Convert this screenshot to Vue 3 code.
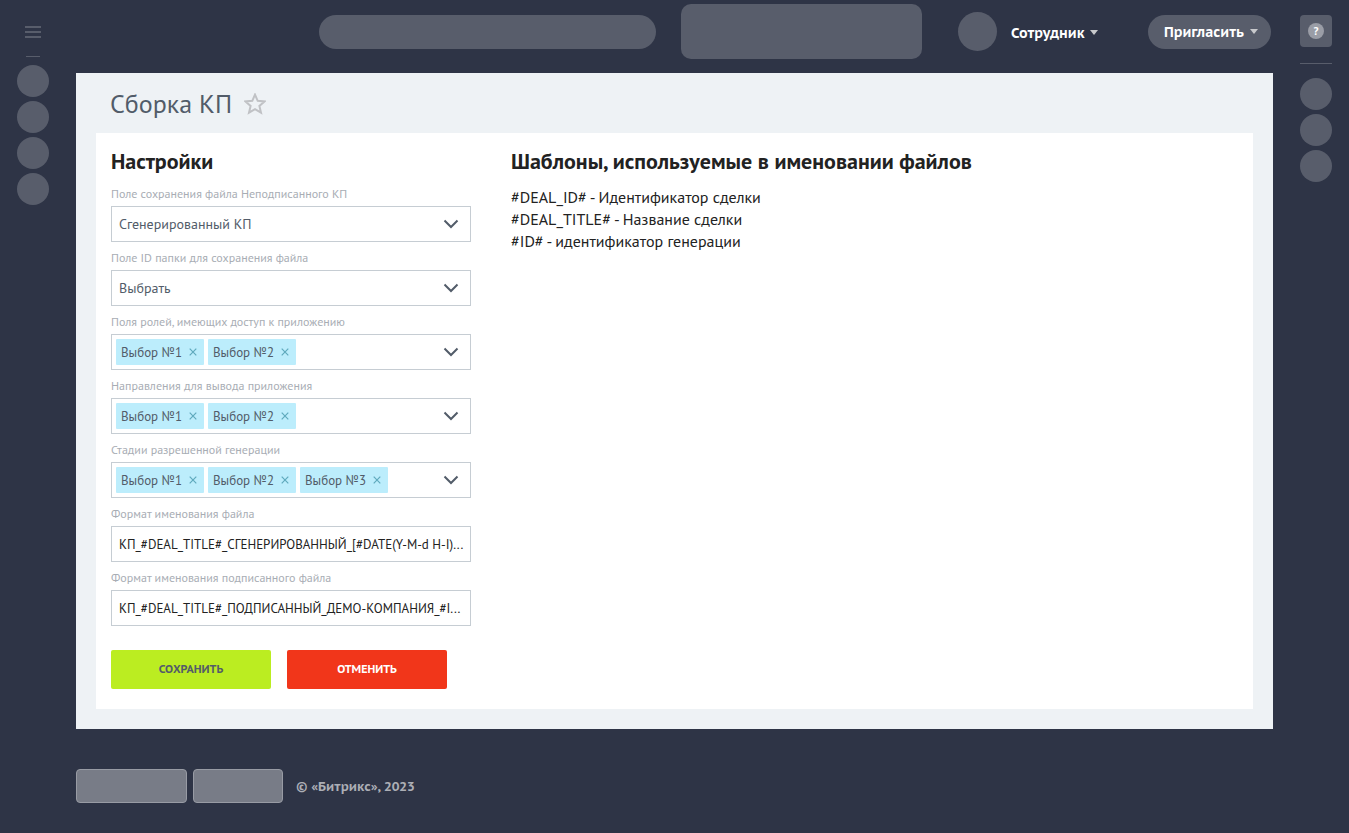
<script setup>
import { reactive, ref } from 'vue'

const selects = reactive([
  { id: 'unsigned-field', label: 'Поле сохранения файла Неподписанного КП', value: 'Сгенерированный КП' },
  { id: 'folder-field', label: 'Поле ID папки для сохранения файла', value: 'Выбрать' },
])

const multis = reactive([
  { id: 'roles', label: 'Поля ролей, имеющих доступ к приложению', tags: ['Выбор №1', 'Выбор №2'] },
  { id: 'directions', label: 'Направления для вывода приложения', tags: ['Выбор №1', 'Выбор №2'] },
  { id: 'stages', label: 'Стадии разрешенной генерации', tags: ['Выбор №1', 'Выбор №2', 'Выбор №3'] },
])

const inputs = reactive([
  { id: 'file-name', label: 'Формат именования файла', value: 'КП_#DEAL_TITLE#_СГЕНЕРИРОВАННЫЙ_[#DATE(Y-M-d H-I)...' },
  { id: 'signed-name', label: 'Формат именования подписанного файла', value: 'КП_#DEAL_TITLE#_ПОДПИСАННЫЙ_ДЕМО-КОМПАНИЯ_#I...' },
])

const templates = ref([
  '#DEAL_ID# - Идентификатор сделки',
  '#DEAL_TITLE# - Название сделки',
  '#ID# - идентификатор генерации',
])

function removeTag(field, index) {
  field.tags.splice(index, 1)
}
</script>

<template>
  <div class="shell">
    <nav class="rail rail-left">
      <button class="burger" type="button"><span></span><span></span><span></span></button>
      <hr class="rail-line short" />
      <button v-for="n in 4" :key="n" class="dot" type="button"></button>
    </nav>

    <div class="center">
      <header class="topbar">
        <div class="search"></div>
        <div class="clock"></div>
        <div class="avatar"></div>
        <button class="user" type="button">
          Сотрудник
          <svg class="caret" viewBox="0 0 8 5"><path d="M0 0h8L4 5z" /></svg>
        </button>
        <button class="invite" type="button">
          Пригласить
          <svg class="caret" viewBox="0 0 8 5"><path d="M0 0h8L4 5z" /></svg>
        </button>
      </header>

      <main class="page">
        <div class="page-head">
          <h1>Сборка КП</h1>
          <button class="star" type="button">
            <svg viewBox="0 0 22 22">
              <path d="M11 1.6l2.7 6.2 6.9.6-5.2 4.5 1.6 6.8-6-3.6-6 3.6 1.6-6.8L1.4 8.4l6.9-.6z" />
            </svg>
          </button>
        </div>

        <div class="panel">
          <form class="settings" @submit.prevent>
            <h2>Настройки</h2>

            <div v-for="f in selects" :key="f.id" class="field">
              <label :for="f.id">{{ f.label }}</label>
              <div class="control">
                <select :id="f.id"><option>{{ f.value }}</option></select>
                <svg class="chevron" viewBox="0 0 16 10"><path d="M1.5 1.5L8 8l6.5-6.5" /></svg>
              </div>
            </div>

            <div v-for="f in multis" :key="f.id" class="field">
              <label :for="f.id">{{ f.label }}</label>
              <div class="control">
                <div class="tags">
                  <span v-for="(tag, i) in f.tags" :key="tag" class="tag">
                    {{ tag }}
                    <button type="button" class="tag-x" @click="removeTag(f, i)">
                      <svg viewBox="0 0 8 8"><path d="M.7.7l6.6 6.6M7.3.7L.7 7.3" /></svg>
                    </button>
                  </span>
                </div>
                <button :id="f.id" type="button" class="opener">
                  <svg class="chevron" viewBox="0 0 16 10"><path d="M1.5 1.5L8 8l6.5-6.5" /></svg>
                </button>
              </div>
            </div>

            <div v-for="f in inputs" :key="f.id" class="field">
              <label :for="f.id">{{ f.label }}</label>
              <div class="control">
                <input :id="f.id" v-model="f.value" type="text" />
              </div>
            </div>

            <div class="actions">
              <button class="save" type="submit">СОХРАНИТЬ</button>
              <button class="cancel" type="button">ОТМЕНИТЬ</button>
            </div>
          </form>

          <section class="templates">
            <h2>Шаблоны, используемые в именовании файлов</h2>
            <ul>
              <li v-for="t in templates" :key="t">{{ t }}</li>
            </ul>
          </section>
        </div>
      </main>

      <footer class="footer">
        <div class="foot-box wide"></div>
        <div class="foot-box"></div>
        <span>© «Битрикс», 2023</span>
      </footer>
    </div>

    <aside class="rail rail-right">
      <button class="help" type="button"><span>?</span></button>
      <hr class="rail-line" />
      <button v-for="n in 3" :key="n" class="dot" type="button"></button>
    </aside>
  </div>
</template>

<style>
body {
  background: #2e3446;
}
</style>

<style scoped>
.shell {
  display: grid;
  grid-template-columns: 66px minmax(0, 1fr) 66px;
  column-gap: 10px;
  min-height: 100vh;
  background: #2e3446;
  color: #222;
  font-family: "PT Sans", Lato, "Noto Sans", sans-serif;
}
.shell * {
  box-sizing: border-box;
}
button {
  margin: 0;
  padding: 0;
  border: 0;
  background: none;
  color: inherit;
  font: inherit;
  cursor: pointer;
}
svg {
  display: block;
}
.rail {
  display: flex;
  flex-direction: column;
  align-items: center;
  gap: 4px;
}
.rail-left {
  padding-top: 26px;
}
.rail-right {
  padding-top: 15px;
}
.burger {
  display: flex;
  flex-direction: column;
  gap: 3px;
  width: 16px;
}
.burger span {
  height: 2px;
  background: #585d6b;
}
.rail-line {
  width: 32px;
  height: 1px;
  margin: 12px 0 10px;
  border: 0;
  background: #585d6b;
}
.rail-line.short {
  width: 14px;
  margin: 14px 0 4px;
}
.dot {
  width: 32px;
  height: 32px;
  border-radius: 50%;
  background: #585d6b;
}
.help {
  display: flex;
  align-items: center;
  justify-content: center;
  width: 32px;
  height: 32px;
  border-radius: 4px;
  background: #585d6b;
}
.help span {
  width: 16px;
  height: 16px;
  border-radius: 50%;
  background: #9a9da6;
  color: #fff;
  font-size: 11px;
  font-weight: 700;
  line-height: 16px;
}
.topbar {
  display: flex;
  align-items: center;
  height: 73px;
  padding: 0 2px 10px 243px;
}
.search {
  flex: 1;
  height: 34px;
  margin-right: 25px;
  border-radius: 17px;
  background: #585d6b;
}
.clock {
  width: 241px;
  height: 55px;
  margin-right: 36px;
  border-radius: 10px;
  background: #585d6b;
}
.avatar {
  width: 39px;
  height: 39px;
  margin-right: 14px;
  border-radius: 50%;
  background: #585d6b;
}
.user,
.invite {
  display: flex;
  align-items: center;
  justify-content: space-between;
  height: 34px;
  color: #fff;
  font-family: "PT Sans Caption", "PT Sans", "Noto Sans", sans-serif;
  font-size: 14px;
  font-weight: 700;
}
.user {
  width: 87px;
  margin-right: 50px;
  padding-top: 2px;
}
.invite {
  width: 123px;
  padding: 0 13px 0 16px;
  border-radius: 17px;
  background: #585d6b;
}
.caret {
  width: 8px;
  height: 5px;
  fill: #c8c9cc;
}
.page {
  padding: 0 20px 20px;
  background: #eef2f5;
}
.page-head {
  display: flex;
  align-items: center;
  gap: 12px;
  height: 60px;
  padding: 2px 0 0 14px;
}
h1 {
  margin: 0;
  color: #525c69;
  font-size: 26px;
  font-weight: 400;
  line-height: 32px;
}
.star {
  width: 22px;
  height: 22px;
}
.star path {
  fill: none;
  stroke: #c0c2c5;
  stroke-width: 2;
}
.panel {
  display: flex;
  gap: 40px;
  padding: 14px 15px 20px;
  background: #fff;
}
.settings {
  flex: 0 0 360px;
}
.templates {
  flex: 1;
}
h2 {
  margin: 0;
  font-size: 22px;
  font-weight: 700;
  line-height: 28px;
}
.field {
  margin-bottom: 8px;
}
.settings h2 {
  margin-bottom: 11px;
}
label {
  display: block;
  height: 20px;
  color: #a8adb4;
  font-size: 12px;
  line-height: 16px;
}
.control {
  display: grid;
  align-items: center;
  height: 36px;
  border: 1px solid #c6cdd3;
}
.control > * {
  grid-area: 1 / 1;
}
select,
input {
  width: 100%;
  height: 34px;
  margin: 0;
  padding: 0 7px;
  border: 0;
  outline: 0;
  background: none;
  font: inherit;
  appearance: none;
}
select {
  color: #525c69;
  font-size: 14px;
}
input {
  padding-right: 4px;
  color: #222;
  font-size: 13px;
  text-overflow: ellipsis;
}
.chevron {
  justify-self: end;
  width: 16px;
  height: 10px;
  margin-right: 11px;
  pointer-events: none;
}
.chevron path {
  fill: none;
  stroke: #525c69;
  stroke-width: 2;
}
.opener {
  justify-self: end;
}
.tags {
  display: flex;
  gap: 4px;
  padding-left: 4px;
}
.tag {
  display: flex;
  align-items: center;
  justify-content: space-between;
  width: 88px;
  height: 26px;
  padding: 0 7px 0 5px;
  border-radius: 1px;
  background: #bcedfc;
  color: #525c69;
  font-size: 13px;
}
.tag-x {
  width: 8px;
  height: 8px;
}
.tag-x path {
  fill: none;
  stroke: #5fa9bd;
  stroke-width: 1.2;
}
.actions {
  display: flex;
  gap: 16px;
  padding-top: 16px;
}
.actions button {
  width: 160px;
  height: 39px;
  padding-bottom: 2px;
  border-radius: 2px;
  font-size: 12px;
  font-weight: 700;
}
.save {
  background: #bbed21;
  color: #535c69;
}
.cancel {
  background: #f1361a;
  color: #fff;
}
ul {
  margin: 11px 0 0;
  padding: 0;
  list-style: none;
  font-size: 16px;
  line-height: 22px;
}
.footer {
  display: flex;
  align-items: center;
  gap: 6px;
  padding: 40px 0 30px;
  color: #acaeb5;
  font-family: "PT Sans Caption", "PT Sans", "Noto Sans", sans-serif;
  font-size: 13px;
  font-weight: 700;
}
.foot-box {
  width: 90px;
  height: 34px;
  border: 1px solid #989ba4;
  border-radius: 4px;
  background: #787c87;
}
.foot-box.wide {
  width: 111px;
}
.footer span {
  padding-left: 7px;
}
</style>
